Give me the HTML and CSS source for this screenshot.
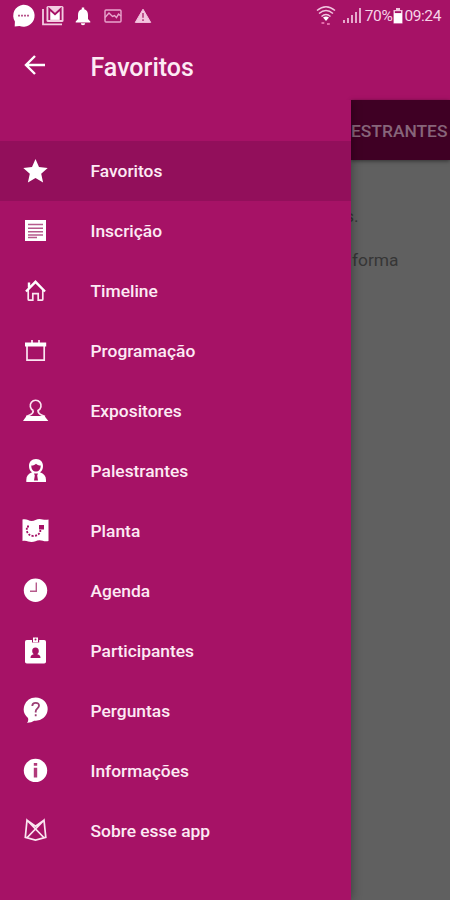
FILE: index.html
```html
<!DOCTYPE html>
<html lang="pt-BR">

<head>
  <meta charset="UTF-8">
  <meta name="viewport" content="width=device-width, initial-scale=1.0">
  <title>Favoritos</title>
  <link rel="stylesheet" href="styles.css">
</head>

<body>
  <header class="top">
    <div class="status-bar">
      <svg class="notifications" width="146" height="32" viewBox="0 0 146 32">
        <!-- chat -->
        <path fill="#fff" d="M23 4.700a11 11 0 1 1-3.500 21.200l-4.800.6.200-5A11 11 0 0 1 23 4.700z" />
        <path stroke="#b8558c" stroke-width="1.600" stroke-dasharray="2 1" d="M18 15.600h11" />
        <!-- mail -->
        <path fill="none" stroke="#f3cde1" stroke-width="1.800" d="M43 9v15.300h19" />
        <rect x="46.500" y="6" width="17" height="16" rx="1.500" fill="#f3cde1" />
        <path fill="#fff" d="M49.500 9l5.500 5 5.500-5v10.500h-11z" />
        <path fill="none" stroke="#a61266" stroke-width="1.900" d="M49.300 20V9l5.700 5.200L60.700 9v11" />
        <!-- bell -->
        <path fill="#fff" d="M81.800 7.500h2.400v1.700c2.700.8 3.800 2.900 3.800 5.800v4l2.300 2.500v1H75.700v-1L78 19v-4c0-2.900 1.100-5 3.800-5.800zM80.800 23.200h4.400a2.200 2 0 0 1-4.400 0z" />
        <!-- picture -->
        <rect x="105" y="10" width="16" height="12" rx="1" fill="none" stroke="#e9a5cd" stroke-width="1.400" />
        <path fill="none" stroke="#e9a5cd" stroke-width="1.400" d="M105 17.500l4-4.500 3.500 3.500 2-1 2 2 2-3.500 2.500 2" />
        <!-- warning -->
        <path fill="#f3c4df" stroke="#f3c4df" stroke-linejoin="round" d="M143 9.200l7.700 13.200h-15.400z" />
        <path stroke="#c0568f" stroke-width="2" d="M143 13v4.800M143 19.200v1.800" />
      </svg>
      <div class="system">
        <svg class="signals" width="46" height="24" viewBox="0 0 46 24">
          <g fill="none" stroke="#f1c5df" stroke-width="1.500">
            <path d="M1 6.500q9-7.600 18 0M3 9.500q7-6 14 0M5.500 12.500q4.500-4 9 0" />
          </g>
          <path fill="#fff" d="M7 13.500q3-2 6 0l-3 3.500z" />
          <path fill="#e46aa9" d="M5.500 18h2.800v2H5.500zM11 19h2.800v2H11z" />
          <path stroke="#f1c5df" stroke-width="1.700" d="M28 16v3M32 14v5M36 11v8M40 8v11M44 4v15" />
        </svg>
        <span>70%</span>
        <svg class="battery" width="10" height="16" viewBox="0 0 10 16">
          <path fill="#f1c5df" d="M3 0h4v2H3zM.500 2h9v13.500h-9z" />
          <path fill="#a61266" d="M2 3.200h6v2H2z" />
          <path fill="#fff" d="M1 5.200h8V15H1z" />
        </svg>
        <span>09:24</span>
      </div>
    </div>
    <div class="toolbar">
      <svg class="back" width="24" height="24" viewBox="0 0 24 24">
        <path d="M22 12H3M12 3l-9 9 9 9" />
      </svg>
      <h1>Favoritos</h1>
    </div>
  </header>

  <main class="screen">
    <nav class="drawer">
      <a class="item active">
        <svg class="icon" viewBox="0 0 28 28">
          <path class="fill" d="M13.500 2l3.500 8 8.700.9-6.500 5.800 1.900 8.900-7.600-4.500-7.600 4.500 1.900-8.900L1.300 10.900l8.700-.9z" />
        </svg>
        <span>Favoritos</span>
      </a>
      <a class="item">
        <svg class="icon" viewBox="0 0 28 28">
          <path class="fill" d="M3 3h21v21H3z" />
          <path class="cut" d="M6 7.500h15M6 11.200h15M6 14.800h15M6 18h15M6 20.500h9" />
        </svg>
        <span>Inscrição</span>
      </a>
      <a class="item">
        <svg class="icon" viewBox="0 0 28 28">
          <path class="line" d="M6.200 13v9.200q0 1 1 1h3.600v-6.500h5.400v6.500h3.600q1 0 1-1V13" />
          <path class="line bold" d="M4 14.500l9.500-9.700 9.500 9.700M7 10.500V5.500" />
        </svg>
        <span>Timeline</span>
      </a>
      <a class="item">
        <svg class="icon" viewBox="0 0 28 28">
          <path class="line" d="M5 8v15.200h17.200V8M10 3v3M17 3v3" />
          <path class="fill" d="M3 5.500h21.200v4H3z" />
        </svg>
        <span>Programação</span>
      </a>
      <a class="item">
        <svg class="icon" viewBox="0 0 28 28">
          <path class="line" d="M11.300 13.500a5.400 5.400 0 1 1 4.700 0q0 3 3.500 4.500l3.500 1.500M11.300 13.500q0 3-3.500 4.500l-3.500 1.500" />
          <path class="fill" d="M4.500 19h18l3.800 5H1z" />
        </svg>
        <span>Expositores</span>
      </a>
      <a class="item">
        <svg class="icon" viewBox="0 0 28 28">
          <path class="fill" d="M14 2c4.500 0 7 3 7 7 0 3-1 5-3 6.300 4 1.400 6 3.700 6 7.700v2H4.300v-2c0-4 2-6.300 5.700-7.700C8 14 7 12 7 9c0-4 2.500-7 7-7z" />
          <path class="hole" d="M9.300 8.500c2.500 0 3.500-.6 4.700-1.800 1.200 1.200 2.500 1.800 4.700 1.800 0 4-2 6-4.700 6s-4.700-2-4.700-6zM12 16.500h4l-.8 2 .8 5h-4l.8-5z" />
        </svg>
        <span>Palestrantes</span>
      </a>
      <a class="item">
        <svg class="icon" viewBox="0 0 28 28">
          <path class="fill" d="M.500 2.500c4-1 6 1.500 9 1.500s5-2 8-2 5 1.500 9 .5v21.500c-4 1-6-.8-9-.8s-5 1.800-8 1.800-5-2-9-1z" />
          <path class="dots" d="M7 9.500H4.800V14q1.500 4.500 6.500 5 5-.3 7-4V12" />
          <path class="hole" d="M17 8h5v4.500h-5z" />
        </svg>
        <span>Planta</span>
      </a>
      <a class="item">
        <svg class="icon" viewBox="0 0 28 28">
          <circle class="fill" cx="13.500" cy="13.200" r="11.700" />
          <path class="cut" d="M14.300 5.500v8.800H8" />
        </svg>
        <span>Agenda</span>
      </a>
      <a class="item">
        <svg class="icon" viewBox="0 0 28 28">
          <rect class="fill" x="3" y="3" width="21" height="23.500" rx="1.800" />
          <path class="hole" d="M10 2.500h7.200v3H10z" />
          <path class="fill" d="M11 .500h5v4.800h-5z" />
          <circle class="hole" cx="13.500" cy="2.500" r="1" />
          <path class="hole" d="M13.500 10.500c2.300 0 3.300 1.500 3.300 3.500 0 1.500-.7 2.500-1.500 3.200 2.200.6 3.200 1.300 3.200 3.800h-10c0-2.500 1-3.200 3.200-3.800-.8-.7-1.500-1.700-1.500-3.200 0-2 1-3.500 3.300-3.500z" />
        </svg>
        <span>Participantes</span>
      </a>
      <a class="item">
        <svg class="icon" viewBox="0 0 28 28">
          <path class="fill" d="M13.600.4a11.900 11.700 0 1 1-1.400 23.300Q9.500 25.800 5 25.700q1.800-1.700 1-4.700A11.900 11.700 0 0 1 13.600.4z" />
          <path class="cut question" d="M10.300 9q0-3.200 3.400-3.200T17 8.800c0 2.500-3.300 2.700-3.300 5.700v1M13.700 17.300v2" />
        </svg>
        <span>Perguntas</span>
      </a>
      <a class="item">
        <svg class="icon" viewBox="0 0 28 28">
          <circle class="fill" cx="13.500" cy="13.400" r="11.700" />
          <path class="info" d="M13.500 6v2.800M13.500 10.800v9.700" />
        </svg>
        <span>Informações</span>
      </a>
      <a class="item">
        <svg class="icon" viewBox="0 0 28 28">
          <path class="line" d="M3.300 20.300L5 3.200l17 17.500-8.500 2.300zM23.800 20.300L22 3.200l-17 17.500 8.500 2.300zM5 3.200l8.500 6 8.500-6" />
        </svg>
        <span>Sobre esse app</span>
      </a>
    </nav>

    <section class="page">
      <div class="tab">ESTRANTES</div>
      <p class="first">s.</p>
      <p>forma</p>
    </section>
  </main>
</body>

</html>
```

FILE: styles.css
```css
* {
  box-sizing: border-box;
}

body {
  margin: 0;
  height: 900px;
  overflow: hidden;
  display: flex;
  flex-direction: column;
  background-color: #a61266;
  font-family: Roboto, sans-serif;
  color: #fdeaf4;
}

.top {
  height: 100px;
}

.status-bar {
  height: 32px;
  display: flex;
  justify-content: space-between;
}

.notifications {
  overflow: visible;
}

.system {
  display: flex;
  align-items: center;
  padding-right: 9px;
  font-size: 15.5px;
  letter-spacing: -0.4px;
  color: #f7d5e8;
}

.signals {
  margin-right: 3px;
}

.battery {
  margin: 0 1px;
}

.toolbar {
  display: flex;
  align-items: center;
  height: 70px;
  padding-left: 23px;
}

.back {
  fill: none;
  stroke: #fff;
  stroke-width: 2.4;
  margin-bottom: 5px;
}

h1 {
  margin: 0 0 0 43.5px;
  font-size: 25px;
  font-weight: 500;
}

.screen {
  flex: 1;
  display: flex;
}

.drawer {
  width: 351px;
  padding-top: 41px;
  background-color: #a61266;
  box-shadow: 0 0 10px rgba(0, 0, 0, 0.4);
  clip-path: inset(0 -20px 0 0);
  z-index: 1;
}

.item {
  display: flex;
  align-items: center;
  gap: 40.5px;
  height: 60px;
  padding-left: 22px;
  font-size: 17.4px;
  font-weight: 500;
}

.active {
  background-color: #920f5b;
}

.icon {
  width: 28px;
  height: 28px;
}

.fill {
  fill: #fff;
}

.hole {
  fill: #a61266;
}

.line {
  fill: none;
  stroke: #fbe6f1;
  stroke-width: 1.7;
}

.bold {
  stroke: #fff;
  stroke-width: 2.4;
}

.cut {
  fill: none;
  stroke: #b65a8c;
  stroke-width: 1.4;
}

.question {
  stroke: #9c3f74;
  stroke-width: 1.8;
}

.dots {
  fill: none;
  stroke: #a61266;
  stroke-width: 1.8;
  stroke-dasharray: 2 1.4;
}

.info {
  stroke: #b0397a;
  stroke-width: 3.4;
}

.page {
  flex: 1;
  background-color: #606060;
  color: #363636;
  font-size: 17.4px;
}

.page p {
  margin: 0 0 0 1px;
  line-height: 44px;
}

.page .first {
  margin: 34px 0 0 -6px;
}

.tab {
  height: 60px;
  line-height: 62px;
  background-color: #3f0024;
  color: #87657a;
  font-size: 17.4px;
  font-weight: 500;
  box-shadow: 0 1px 4px rgba(0, 0, 0, 0.5);
}
```
